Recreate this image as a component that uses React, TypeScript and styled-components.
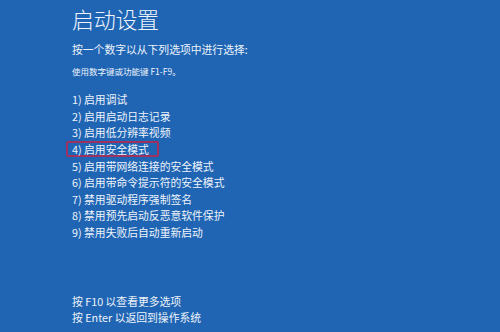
import React from "react";
import styled, { createGlobalStyle } from "styled-components";

const GlobalStyle = createGlobalStyle`
  html, body {
    margin: 0;
    padding: 0;
    background: #1f65b4;
  }
`;

const options = [
  "启用调试",
  "启用启动日志记录",
  "启用低分辨率视频",
  "启用安全模式",
  "启用带网络连接的安全模式",
  "启用带命令提示符的安全模式",
  "禁用驱动程序强制签名",
  "禁用预先启动反恶意软件保护",
  "禁用失败后自动重新启动",
];

const App: React.FC = () => {
  return (
    <>
      <GlobalStyle />
      <Screen>
        <Title>启动设置</Title>
        <Subtitle>按一个数字以从下列选项中进行选择:</Subtitle>
        <Hint>使用数字键或功能键 F1-F9。</Hint>

        <OptionList>
          {options.map((text, i) => (
            <Option key={i} $selected={i === 3}>
              {i + 1}) {text}
            </Option>
          ))}
        </OptionList>

        <Footer>
          <FooterLine>按 F10 以查看更多选项</FooterLine>
          <FooterLine>按 Enter 以返回到操作系统</FooterLine>
        </Footer>
      </Screen>
    </>
  );
};

export default App;

const Screen = styled.div`
  width: 500px;
  height: 332px;
  box-sizing: border-box;
  padding: 4px 0 7px 72px;
  display: flex;
  flex-direction: column;
  align-items: flex-start;
  background: #1f65b4;
  color: #eef3fa;
  font-family: "Noto Sans CJK SC", "Noto Sans", sans-serif;
  overflow: hidden;
`;

const Title = styled.h1`
  margin: 0;
  font-size: 22px;
  font-weight: 300;
  line-height: 28px;
  letter-spacing: -0.3px;
`;

const Subtitle = styled.div`
  margin-top: 10px;
  font-size: 10.8px;
  line-height: 14px;
`;

const Hint = styled.div`
  margin-top: 9px;
  font-size: 8.5px;
  line-height: 12px;
`;

const OptionList = styled.div`
  margin-top: 14px;
  display: flex;
  flex-direction: column;
  align-items: flex-start;
`;

const Option = styled.div<{ $selected?: boolean }>`
  box-sizing: border-box;
  height: 16.6px;
  display: flex;
  align-items: center;
  font-size: 10.8px;
  white-space: nowrap;
  margin-left: ${(p) => (p.$selected ? "-6px" : "0")};
  padding: 0 ${(p) => (p.$selected ? "4px" : "0")};
  width: ${(p) => (p.$selected ? "93px" : "auto")};
  border: ${(p) => (p.$selected ? "2px solid rgba(180, 40, 80, 0.85)" : "none")};
  border-radius: 2px;
`;

const Footer = styled.div`
  margin-top: auto;
  display: flex;
  flex-direction: column;
`;

const FooterLine = styled.div`
  font-size: 10.8px;
  line-height: 15.5px;
`;
